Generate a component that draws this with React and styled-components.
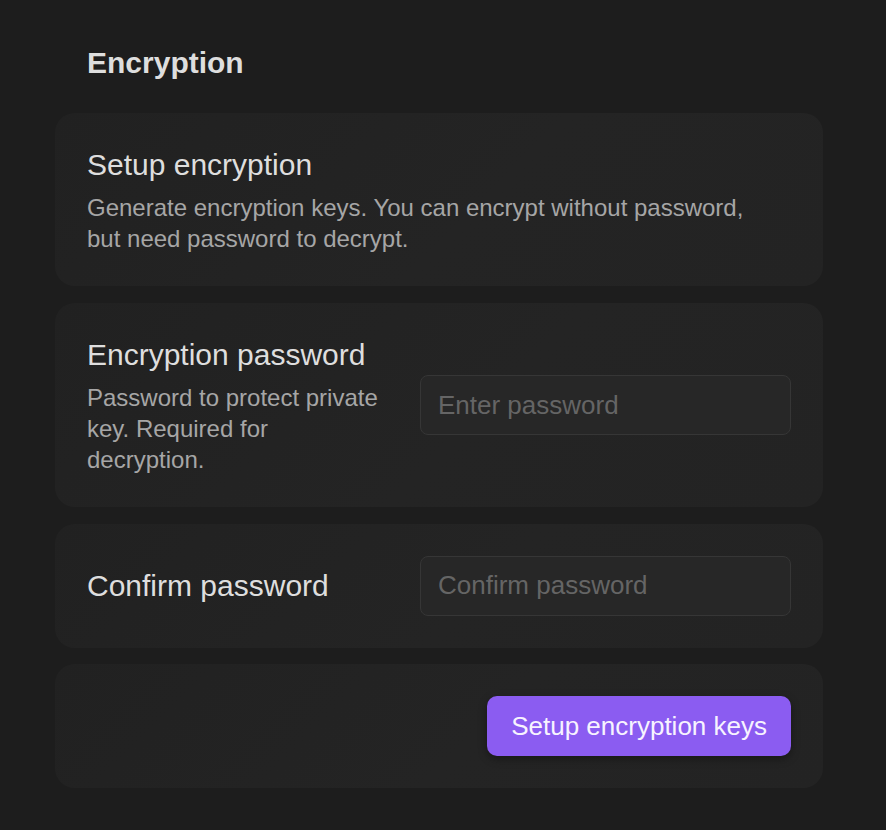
import styled, { createGlobalStyle } from "styled-components";

const GlobalStyle = createGlobalStyle`
  html, body {
    margin: 0;
    padding: 0;
    background: #1d1d1d;
  }
  body {
    font-family: "Liberation Sans", Arial, sans-serif;
    min-height: 830px;
  }
`;

const Page = styled.div`
  padding: 46px 0 40px 55px;
  width: 768px;
`;

const Heading = styled.h2`
  margin: 0 0 33px;
  padding-left: 32px;
  font-size: 30px;
  font-weight: 700;
  line-height: 34px;
  color: #dedede;
`;

const Stack = styled.div`
  display: flex;
  flex-direction: column;
  gap: 16.5px;
`;

const Card = styled.section`
  box-sizing: border-box;
  padding: 32px;
  border-radius: 20px;
  background: linear-gradient(135deg, #212121 0%, #242424 55%, #232323 100%);
  display: ${(p) => (p.$row ? "grid" : "block")};
  grid-template-columns: 1fr 371px;
  column-gap: 32px;
  align-items: center;
`;

const Title = styled.h3`
  margin: 0;
  font-size: 30px;
  font-weight: 400;
  line-height: 1.3;
  color: #dedede;
`;

const Desc = styled.p`
  margin: 8px 0 0;
  font-size: 24px;
  line-height: 1.3;
  color: #a6a6a6;
  max-width: 660px;
`;

const Input = styled.input`
  box-sizing: border-box;
  width: 100%;
  height: 60px;
  padding: 0 17px;
  border: 1px solid #363636;
  border-radius: 8px;
  background: #272727;
  color: #ddd;
  font-family: inherit;
  font-size: 26px;
  outline: none;

  &::placeholder {
    color: #656565;
  }
`;

const Actions = styled(Card)`
  display: flex;
  justify-content: flex-end;
`;

const Button = styled.button`
  height: 60px;
  padding: 0 24px;
  border: none;
  border-radius: 10px;
  background: #8b5cf1;
  color: #f7f3ff;
  font-family: inherit;
  font-size: 26px;
  box-shadow: 0 3px 8px rgba(0, 0, 0, 0.35);
  cursor: pointer;
`;

export default function App() {
  return (
    <>
      <GlobalStyle />
      <Page>
        <Heading>Encryption</Heading>
        <Stack>
          <Card>
            <Title>Setup encryption</Title>
            <Desc>
              Generate encryption keys. You can encrypt without password, but
              need password to decrypt.
            </Desc>
          </Card>
          <Card $row>
            <div>
              <Title>Encryption password</Title>
              <Desc>Password to protect private key. Required for decryption.</Desc>
            </div>
            <Input type="password" placeholder="Enter password" />
          </Card>
          <Card $row>
            <Title>Confirm password</Title>
            <Input type="password" placeholder="Confirm password" />
          </Card>
          <Actions>
            <Button>Setup encryption keys</Button>
          </Actions>
        </Stack>
      </Page>
    </>
  );
}
